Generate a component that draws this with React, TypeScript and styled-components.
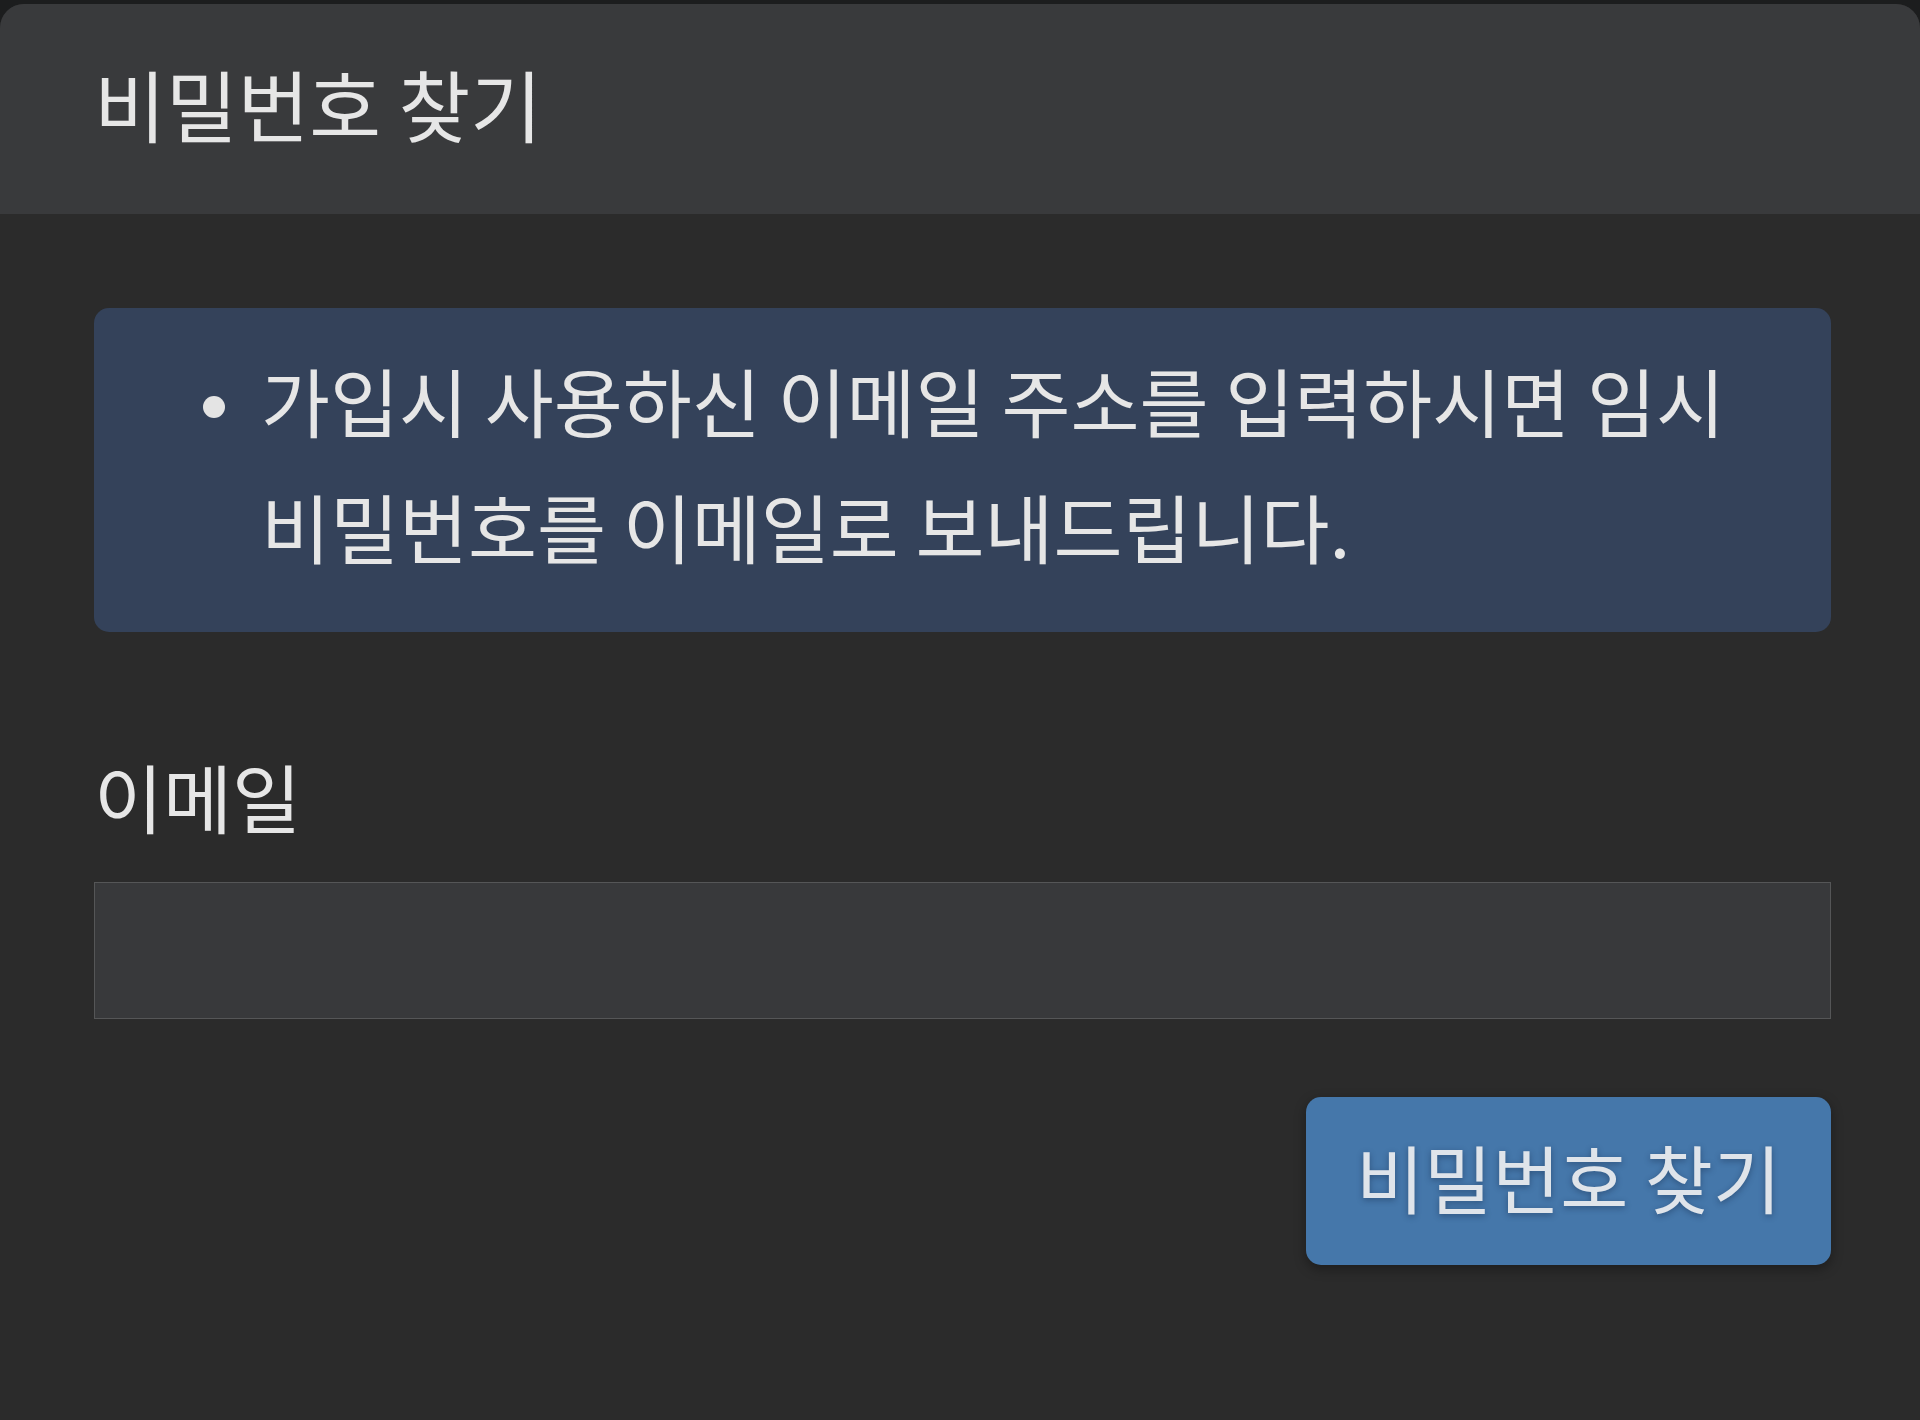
import { FC } from 'react';
import styled, { createGlobalStyle } from 'styled-components';

const textColor = '#e6e6e6';
const fontStack = '"Noto Sans CJK KR", "Noto Sans", sans-serif';

const GlobalStyle = createGlobalStyle`
	html, body {
		margin: 0;
		padding: 0;
		background: #1c1d1e;
	}
	body {
		font-family: ${fontStack};
		color: ${textColor};
	}
	* {
		box-sizing: border-box;
	}
`;

const Dialog = styled.div`
	margin-top: 4px;
	width: 1920px;
	min-height: 1416px;
	background: #2b2b2b;
	border-radius: 24px 24px 0 0;
	overflow: hidden;
	display: flex;
	flex-direction: column;
`;

const Header = styled.header`
	height: 210px;
	background: #393a3c;
	display: flex;
	align-items: center;
	padding: 0 94px 12px;
`;

const Title = styled.h1`
	margin: 0;
	font-size: 78px;
	font-weight: 400;
	line-height: 1;
	color: ${textColor};
`;

const Body = styled.div`
	padding: 94px 89px 0 94px;
	display: flex;
	flex-direction: column;
`;

const Notice = styled.ul`
	margin: 0;
	list-style: none;
	background: #34425a;
	border-radius: 15px;
	padding: 29px 40px 43px 109px;
`;

const NoticeItem = styled.li`
	display: flex;
	align-items: flex-start;
	font-size: 75px;
	line-height: 126px;
	word-break: keep-all;
`;

const Bullet = styled.span`
	flex: none;
	width: 22px;
	height: 22px;
	border-radius: 50%;
	background: #e4e4e4;
	margin: 59px 36px 0 0;
`;

const Label = styled.label`
	display: block;
	margin: 124px 0 46px;
	font-size: 75px;
	line-height: 80px;
`;

const Input = styled.input`
	display: block;
	width: 100%;
	height: 137px;
	margin: 0;
	background: #38393b;
	border: 1px solid #555657;
	border-radius: 0;
	color: ${textColor};
	font-family: inherit;
	font-size: 60px;
	padding: 0 24px;
	outline: none;
`;

const Actions = styled.div`
	display: flex;
	justify-content: flex-end;
	margin-top: 78px;
`;

const SubmitButton = styled.button`
	width: 525px;
	height: 168px;
	padding: 0 0 10px;
	border: none;
	border-radius: 15px;
	background: #4577aa;
	color: #dfe4ea;
	font-family: inherit;
	font-size: 74px;
	font-weight: 400;
	line-height: 1;
	text-shadow: 0 2px 6px rgba(20, 40, 70, 0.45);
	box-shadow: 0 4px 12px rgba(0, 0, 0, 0.35);
	cursor: pointer;
`;

const App: FC = () => {
	return (
		<>
			<GlobalStyle />
			<Dialog>
				<Header>
					<Title>비밀번호 찾기</Title>
				</Header>
				<Body>
					<Notice>
						<NoticeItem>
							<Bullet />
							<span>가입시 사용하신 이메일 주소를 입력하시면 임시 비밀번호를 이메일로 보내드립니다.</span>
						</NoticeItem>
					</Notice>
					<Label htmlFor="email">이메일</Label>
					<Input id="email" type="email" />
					<Actions>
						<SubmitButton type="button">비밀번호 찾기</SubmitButton>
					</Actions>
				</Body>
			</Dialog>
		</>
	);
};

export default App;
